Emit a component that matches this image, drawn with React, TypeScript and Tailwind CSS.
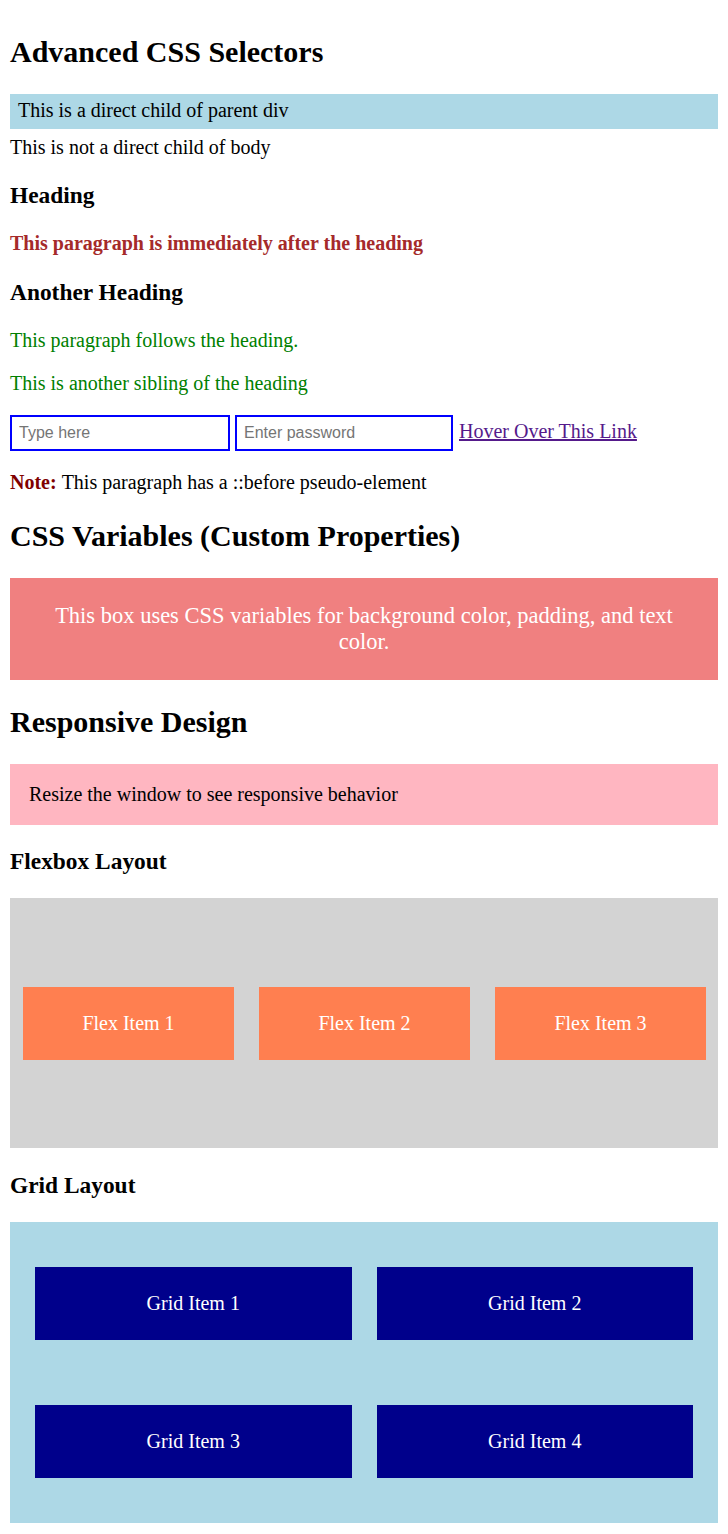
import React from "react";

export default function App() {
  return (
    <div className="flex flex-col bg-white px-[10px] pt-[10px] pb-[11px] font-['Liberation_Serif','Times_New_Roman',serif] text-[20px] leading-[23px] text-black">
      <h1 className="mt-[24.9px] text-[30px] font-bold leading-[34.5px]">Advanced CSS Selectors</h1>

      <div className="mt-[24.6px] bg-[#add8e6] pl-[8px] pt-[5px] pb-[7px]">This is a direct child of parent div</div>
      <p className="mt-[6.75px]">This is not a direct child of body</p>

      <h3 className="mt-[23.4px] text-[23.4px] font-bold leading-[26.9px]">Heading</h3>
      <p className="mt-[23.4px] font-bold text-[#a52a2a]">This paragraph is immediately after the heading</p>

      <h3 className="mt-[23.4px] text-[23.4px] font-bold leading-[26.9px]">Another Heading</h3>
      <p className="mt-[23.4px] text-[#008000]">This paragraph follows the heading.</p>
      <p className="mt-[20px] text-[#008000]">This is another sibling of the heading</p>

      <div className="mt-[20px] flex items-baseline gap-[5px]">
        <input
          type="text"
          placeholder="Type here"
          className="box-border h-[36px] w-[220px] border-2 border-[#0000ff] bg-white px-[7px] py-[7px] font-['Liberation_Sans',Arial,sans-serif] text-[16px] leading-[18px] outline-none placeholder:text-[#757575]"
        />
        <input
          type="password"
          placeholder="Enter password"
          className="box-border h-[36px] w-[218px] border-2 border-[#0000ff] bg-white px-[7px] py-[7px] font-['Liberation_Sans',Arial,sans-serif] text-[16px] leading-[18px] outline-none placeholder:text-[#757575]"
        />
        <a href="#" className="ml-[1px] text-[#551a8b] underline">Hover Over This Link</a>
      </div>

      <p className="mt-[20px]">
        <span className="font-bold text-[#800000]">Note: </span>This paragraph has a ::before pseudo-element
      </p>

      <h2 className="mt-[24.9px] text-[30px] font-bold leading-[34.5px]">CSS Variables (Custom Properties)</h2>
      <div className="mt-[24.9px] bg-[#f08080] px-[25px] pt-[25px] pb-[26px] text-center text-[22.5px] leading-[25.5px] text-white">
        This box uses CSS variables for background color, padding, and text color.
      </div>

      <h2 className="mt-[24.6px] text-[30px] font-bold leading-[34.5px]">Responsive Design</h2>
      <div className="mt-[24.5px] bg-[#ffb6c1] px-[19px] py-[19px]">Resize the window to see responsive behavior</div>

      <h3 className="mt-[23.4px] text-[23.4px] font-bold leading-[26.9px]">Flexbox Layout</h3>
      <div className="mt-[23.2px] flex h-[250px] items-center gap-[25px] bg-[#d3d3d3] pl-[13px] pr-[12px]">
        {["Flex Item 1", "Flex Item 2", "Flex Item 3"].map((t) => (
          <div key={t} className="flex-1 bg-[#ff7f50] py-[25px] text-center text-white">
            {t}
          </div>
        ))}
      </div>

      <h3 className="mt-[23.4px] text-[23.4px] font-bold leading-[26.9px]">Grid Layout</h3>
      <div className="mt-[23.4px] grid grid-cols-2 gap-x-[25px] gap-y-[65px] bg-[#add8e6] px-[25px] py-[45px]">
        {["Grid Item 1", "Grid Item 2", "Grid Item 3", "Grid Item 4"].map((t) => (
          <div key={t} className="bg-[#00008b] py-[25px] text-center text-white">
            {t}
          </div>
        ))}
      </div>
    </div>
  );
}
